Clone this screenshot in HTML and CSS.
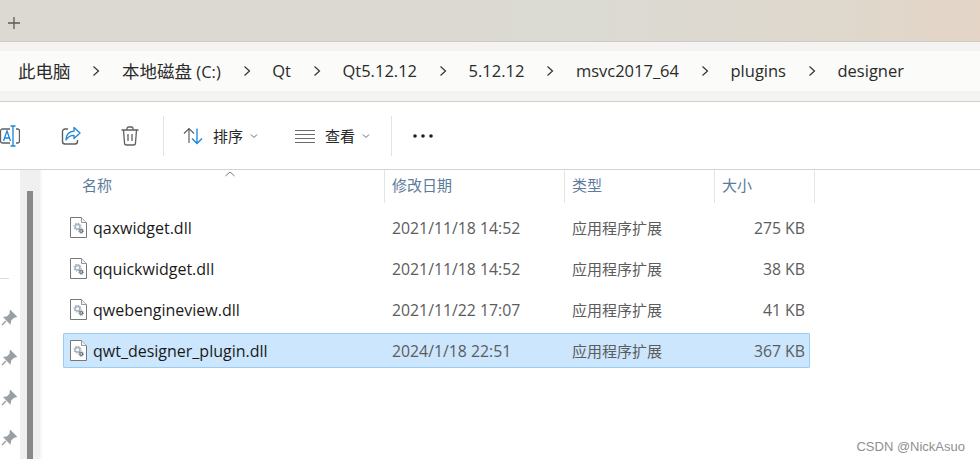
FILE: index.html
```html
<!DOCTYPE html>
<html lang="zh">
<head>
<meta charset="utf-8">
<title>designer</title>
<link rel="stylesheet" href="styles.css">
</head>
<body>
<svg class="defs" width="0" height="0">
  <defs>
    <symbol id="chevron" viewBox="0 0 8 12"><path d="M1.500 1.500 6.500 6l-5 4.500" stroke="#333" stroke-width="1.200" fill="none"/></symbol>
    <symbol id="pin" viewBox="0 0 16 16"><path d="M9.500 1 15 6.500l-2.500.8-3 3-.5 2.800-5.500-5.600 2.800-.5 3-3zM5 11l-4 4" stroke="#98a0a6" stroke-width="1.500" fill="#98a0a6"/></symbol>
    <symbol id="dll" viewBox="0 0 17 21">
      <path d="M.5.5h11l5 5v15H.5z" fill="#fff" stroke="#777"/>
      <path d="M11.500.5v5h5" fill="#f0f0f0" stroke="#999"/>
      <circle cx="7.500" cy="9.700" r="2.300" fill="none" stroke="#aab4bd" stroke-width="1.600"/>
      <circle cx="7.500" cy="9.700" r="3.500" fill="none" stroke="#aab4bd" stroke-width="1.100" stroke-dasharray="1.400 1.350"/>
      <circle cx="11.200" cy="14" r="1.400" fill="none" stroke="#66707a" stroke-width="1.200"/>
      <circle cx="11.200" cy="14" r="2.400" fill="none" stroke="#66707a" stroke-width=".8" stroke-dasharray="1 .9"/>
    </symbol>
  </defs>
</svg>
<header class="tabbar">
  <svg class="plus" width="14" height="14" viewBox="0 0 14 14"><path d="M7 1v12M1 7h12" stroke="#5a5a58" stroke-width="1.300" fill="none"/></svg>
</header>
<nav class="addressband">
  <div class="crumbs">
    <span class="crumb cjk">此电脑</span><svg class="sep" width="8" height="12"><use href="#chevron"/></svg>
    <span class="crumb"><span class="cjk">本地磁盘</span> (C:)</span><svg class="sep" width="8" height="12"><use href="#chevron"/></svg>
    <span class="crumb">Qt</span><svg class="sep" width="8" height="12"><use href="#chevron"/></svg>
    <span class="crumb">Qt5.12.12</span><svg class="sep" width="8" height="12"><use href="#chevron"/></svg>
    <span class="crumb">5.12.12</span><svg class="sep" width="8" height="12"><use href="#chevron"/></svg>
    <span class="crumb">msvc2017_64</span><svg class="sep" width="8" height="12"><use href="#chevron"/></svg>
    <span class="crumb">plugins</span><svg class="sep" width="8" height="12"><use href="#chevron"/></svg>
    <span class="crumb">designer</span>
  </div>
</nav>
<section class="toolbar">
  <svg class="tool-rename" width="20" height="22" viewBox="0 0 20 22"><path d="M10 4H2.500A2 2 0 0 0 .500 6v10a2 2 0 0 0 2 2H10M16 4h1.500a2 2 0 0 1 2 2v10a2 2 0 0 1-2 2H16" stroke="#5f5f5f" stroke-width="1.300" fill="none"/><path d="M10.500 1h5M13 1v20M10.500 21h5" stroke="#1a86d9" stroke-width="1.300" fill="none"/><path d="M3.500 16 7 6l3.500 10M4.700 13h4.600" stroke="#1a86d9" stroke-width="1.300" fill="none"/></svg>
  <svg class="tool-share" width="20" height="20" viewBox="0 0 20 20"><path d="M7 3H4a2.500 2.500 0 0 0-2.500 2.500v10A2.500 2.500 0 0 0 4 18h10a2.500 2.500 0 0 0 2.500-2.500V14" stroke="#606060" stroke-width="1.400" fill="none"/><path d="M13 1.500 19 7l-6 5.500V9.300C9.500 9.300 7 10.500 5 14c.2-5 3-8.500 8-8.800z" stroke="#1a86d9" stroke-width="1.300" fill="none" stroke-linejoin="round"/></svg>
  <svg class="tool-trash" width="18" height="20" viewBox="0 0 18 20"><path d="M.500 4h17M6 4V2.500A1.500 1.500 0 0 1 7.500 1h3A1.500 1.500 0 0 1 12 2.500V4M2.500 4l1 13a2 2 0 0 0 2 2h7a2 2 0 0 0 2-2l1-13M7 8v7M11 8v7" stroke="#606060" stroke-width="1.300" fill="none"/></svg>
  <span class="divider div1"></span>
  <svg class="tool-sort" width="20" height="18" viewBox="0 0 20 18"><path d="M6 16V1.500M1 6.500l5-5 5 5" stroke="#606060" stroke-width="1.200" fill="none"/><path d="M14 1.500V16.500M9 11.500l5 5 5-5" stroke="#1a86d9" stroke-width="1.300" fill="none"/></svg>
  <span class="tool-label label-sort">排序</span>
  <svg class="chev" width="8" height="6" viewBox="0 0 8 6"><path d="M1 1.500 4 4.500l3-3" stroke="#666" stroke-width="1" fill="none"/></svg>
  <svg class="tool-view" width="20" height="14" viewBox="0 0 20 14"><path d="M0 1.500h20M0 5.500h20M0 9.500h20M0 13.500h20" stroke="#6a6a6a" stroke-width="1.100" fill="none"/></svg>
  <span class="tool-label label-view">查看</span>
  <svg class="chev" width="8" height="6" viewBox="0 0 8 6"><path d="M1 1.500 4 4.500l3-3" stroke="#666" stroke-width="1" fill="none"/></svg>
  <span class="divider div2"></span>
  <svg class="tool-more" width="20" height="4" viewBox="0 0 20 4"><circle cx="2" cy="2" r="1.800" fill="#222"/><circle cx="10" cy="2" r="1.800" fill="#222"/><circle cx="18" cy="2" r="1.800" fill="#222"/></svg>
</section>
<main class="body">
  <aside class="sidebar">
    <hr class="side-rule">
    <svg class="pin" width="16" height="16"><use href="#pin"/></svg>
    <svg class="pin" width="16" height="16"><use href="#pin"/></svg>
    <svg class="pin" width="16" height="16"><use href="#pin"/></svg>
    <svg class="pin" width="16" height="16"><use href="#pin"/></svg>
  </aside>
  <div class="scrolltrack"><div class="thumb"></div></div>
  <div class="files">
    <div class="cols head">
      <div class="hcell h-name">名称</div>
      <div class="hcell">修改日期</div>
      <div class="hcell">类型</div>
      <div class="hcell">大小</div>
    </div>
    <svg class="sortcaret" width="10" height="6" viewBox="0 0 10 6"><path d="M.5 5 5 1l4.500 4" stroke="#7a7a7a" stroke-width="1" fill="none"/></svg>

    <div class="cols row">
      <div class="cell-name"><svg class="dll" width="17" height="21"><use href="#dll"/></svg><span>qaxwidget.dll</span></div>
      <div class="cell-date">2021/11/18 14:52</div>
      <div class="cell-type">应用程序扩展</div>
      <div class="cell-size">275 KB</div>
    </div>
    <div class="cols row">
      <div class="cell-name"><svg class="dll" width="17" height="21"><use href="#dll"/></svg><span>qquickwidget.dll</span></div>
      <div class="cell-date">2021/11/18 14:52</div>
      <div class="cell-type">应用程序扩展</div>
      <div class="cell-size">38 KB</div>
    </div>
    <div class="cols row">
      <div class="cell-name"><svg class="dll" width="17" height="21"><use href="#dll"/></svg><span>qwebengineview.dll</span></div>
      <div class="cell-date">2021/11/22 17:07</div>
      <div class="cell-type">应用程序扩展</div>
      <div class="cell-size">41 KB</div>
    </div>
    <div class="cols row selected">
      <div class="cell-name"><svg class="dll" width="17" height="21"><use href="#dll"/></svg><span>qwt_designer_plugin.dll</span></div>
      <div class="cell-date">2024/1/18 22:51</div>
      <div class="cell-type">应用程序扩展</div>
      <div class="cell-size">367 KB</div>
    </div>
  </div>
  <div class="watermark">CSDN @NickAsuo</div>
</main>
</body>
</html>
```
FILE: styles.css
```css
* { box-sizing: border-box; }
html, body { margin: 0; padding: 0; }
body {
  width: 980px;
  height: 459px;
  overflow: hidden;
  background: #fff;
  font-family: "Open Sans", "Noto Sans CJK SC", sans-serif;
  color: #222;
  display: flex;
  flex-direction: column;
}
.defs { position: absolute; }
.tabbar {
  height: 42px;
  flex: none;
  background: linear-gradient(90deg, #dcd9d3 0%, #dcd9d3 45%, #dbdad3 60%, #dfd8cd 85%, #e4d5c7 100%);
  border-bottom: 1px solid #cfcbc6;
  display: flex;
  align-items: flex-start;
  padding: 16px 0 0 7px;
}
.addressband {
  height: 60px;
  flex: none;
  background: #f4f3f1;
  border-bottom: 1px solid #d2cfca;
  padding-top: 9px;
}
.crumbs {
  height: 40px;
  background: #fbfbf9;
  display: flex;
  align-items: center;
  padding: 0 0 2px 18px;
  font-size: 16.500px;
  color: #2a2a2a;
}
.crumb { white-space: nowrap; }
.cjk { font-family: "Noto Sans CJK SC", sans-serif; font-size: 17.500px; }
.sep { flex: none; margin: 2px 21.750px 0 21.750px; }
.toolbar {
  height: 68px;
  flex: none;
  border-bottom: 1px solid #d6d3cf;
  background: #fff;
  display: flex;
  align-items: center;
  position: relative;
}
.tool-share { margin-left: 41px; }
.tool-trash { margin-left: 40px; }
.divider { width: 1px; height: 40px; background: #e6e4e2; flex: none; }
.div1 { margin-left: 24px; }
.tool-sort { margin-left: 19px; }
.tool-label { font-family: "Noto Sans CJK SC", sans-serif; font-size: 15px; color: #262626; }
.label-sort { margin-left: 10px; }
.chev { margin-left: 7px; flex: none; }
.tool-view { margin-left: 37px; }
.label-view { margin-left: 10px; }
.div2 { margin-left: 21px; }
.tool-more { margin-left: 21px; }
.body {
  flex: 1;
  display: flex;
  position: relative;
  min-height: 0;
}
.sidebar {
  width: 20px;
  flex: none;
  display: flex;
  flex-direction: column;
  align-items: flex-start;
}
.side-rule {
  width: 9px;
  height: 1px;
  margin: 108px 0 0;
  border: 0;
  background: #dedcda;
  flex: none;
}
.pin { flex: none; margin: 24px 0 0 1px; }
.side-rule + .pin { margin-top: 31px; }
.scrolltrack {
  width: 22px;
  flex: none;
  background: #f0f0f0;
  border-right: 2px solid #f7f7f7;
  padding: 21px 0 0 7px;
}
.thumb { width: 6px; height: 100%; background: #8a8a8a; }
.files {
  flex: 1;
  position: relative;
  padding-left: 21px;
}
.cols {
  display: grid;
  grid-template-columns: 321px 180px 150px 97px;
  width: 747px;
}
.head {
  height: 33px;
  width: 752px;
  grid-template-columns: 322px 180px 150px 100px;
  margin-bottom: 7px;
}
.hcell {
  font-family: "Noto Sans CJK SC", sans-serif;
  font-size: 15px;
  color: #5d7b9a;
  padding: 0 0 4px 7px;
  border-right: 1px solid #e4e4e4;
  display: flex;
  align-items: center;
}
.h-name { padding-left: 19px; }
.sortcaret { position: absolute; left: 183px; top: 1px; }
.row {
  height: 35px;
  margin-bottom: 6px;
  align-items: center;
  border: 1px solid transparent;
}
.selected { background: #cbe6fd; border-color: #99cdf6; border-radius: 1px; }
.cell-name {
  display: flex;
  align-items: center;
  padding-left: 6px;
  font-size: 16px;
  color: #1a1a1a;
}
.dll { flex: none; margin-right: 6px; }
.cell-date, .cell-size { font-size: 15.800px; color: #5c5c5c; }
.cell-date { padding-left: 7px; }
.cell-type {
  font-family: "Noto Sans CJK SC", sans-serif;
  padding-left: 7px;
  font-size: 15px;
  color: #5c5c5c;
}
.cell-size { text-align: right; padding-right: 7px; white-space: nowrap; }
.watermark {
  position: absolute;
  right: 15px;
  bottom: 5px;
  font-family: "Liberation Sans", sans-serif;
  font-size: 13px;
  color: #8f8f8f;
}
```
